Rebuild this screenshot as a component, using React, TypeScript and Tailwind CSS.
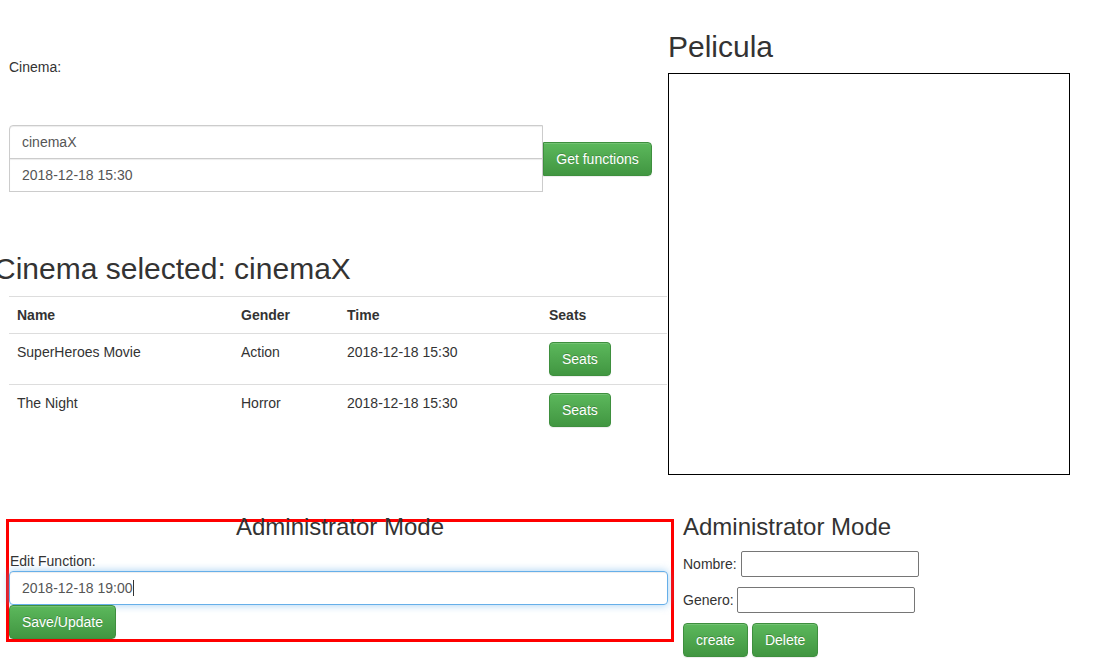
import React from "react";

const btn =
  "inline-flex items-center justify-center h-[34px] px-[12px] text-[14px] leading-[20px] text-white border border-[#3e8f3e] bg-linear-to-b from-[#5cb85c] to-[#419641] [text-shadow:0_-1px_0_rgba(0,0,0,0.2)] shadow-[inset_0_1px_0_rgba(255,255,255,0.15),0_1px_1px_rgba(0,0,0,0.075)]";

const rows = [
  { name: "SuperHeroes Movie", gender: "Action", time: "2018-12-18 15:30" },
  { name: "The Night", gender: "Horror", time: "2018-12-18 15:30" },
];

export default function App() {
  return (
    <div className="w-[1111px] h-[667px] overflow-hidden bg-white font-['Liberation_Sans',Arial,sans-serif] text-[14px] leading-[20px] text-[#333]">
      {/* Row 1 */}
      <div className="flex items-start h-[475px]">
        {/* Left column */}
        <div className="w-[668px] shrink-0">
          <div className="pt-[57px] pl-[9px] h-[77px]">Cinema:</div>
          <div className="mt-[48px] ml-[9px] flex items-center">
            <div className="w-[534px] flex flex-col">
              <div className="h-[34px] flex items-center px-[12px] border border-[#ccc] rounded-tl-[4px] text-[#555] shadow-[inset_0_1px_1px_rgba(0,0,0,0.075)]">
                cinemaX
              </div>
              <div className="-mt-px h-[34px] flex items-center px-[12px] border border-[#ccc] text-[#555] shadow-[inset_0_1px_1px_rgba(0,0,0,0.075)]">
                2018-12-18 15:30
              </div>
            </div>
            <button className={`${btn} w-[109px] rounded-r-[4px]`}>Get functions</button>
          </div>
          <h2 className="mt-[60px] -ml-[6px] h-[33px] text-[30px] leading-[33px] font-normal whitespace-nowrap">
            Cinema selected: cinemaX
          </h2>
          <table className="mt-[11px] ml-[9px] w-[658px] table-fixed border-collapse">
            <colgroup>
              <col className="w-[224px]" />
              <col className="w-[106px]" />
              <col className="w-[202px]" />
              <col className="w-[126px]" />
            </colgroup>
            <thead>
              <tr className="border-t border-b border-[#ddd]">
                <th className="text-left font-bold p-[8px] align-bottom">Name</th>
                <th className="text-left font-bold p-[8px] align-bottom">Gender</th>
                <th className="text-left font-bold p-[8px] align-bottom">Time</th>
                <th className="text-left font-bold p-[8px] align-bottom">Seats</th>
              </tr>
            </thead>
            <tbody>
              {rows.map((r, i) => (
                <tr key={i} className={i > 0 ? "border-t border-[#ddd]" : ""}>
                  <td className="p-[8px] align-top">{r.name}</td>
                  <td className="p-[8px] align-top">{r.gender}</td>
                  <td className="p-[8px] align-top">{r.time}</td>
                  <td className="p-[8px] align-top">
                    <button className={`${btn} rounded-[4px]`}>Seats</button>
                  </td>
                </tr>
              ))}
            </tbody>
          </table>
        </div>
        {/* Right column */}
        <div className="pt-[30px]">
          <h2 className="h-[33px] text-[30px] leading-[33px] font-normal">Pelicula</h2>
          <div className="mt-[10px] w-[402px] h-[402px] border border-black"></div>
        </div>
      </div>

      {/* Row 2 */}
      <div className="flex items-start">
        <div className="ml-[6px] mt-[44px] w-[668px] shrink-0 border-[3px] border-[#ff0000]">
          <h3 className="-mt-[8px] h-[26px] text-center text-[24px] leading-[26px] font-normal">
            Administrator Mode
          </h3>
          <div className="mt-[11px] h-[20px] pl-[1px]">Edit Function:</div>
          <div className="w-[659px] h-[34px] flex items-center px-[12px] border border-[#66afe9] rounded-[4px] text-[#555] shadow-[inset_0_1px_1px_rgba(0,0,0,0.075),0_0_8px_rgba(102,175,233,0.6)]">
            2018-12-18 19:00
            <span className="inline-block w-px h-[16px] bg-[#333]"></span>
          </div>
          <button className={`${btn} rounded-[4px]`}>Save/Update</button>
        </div>
        <div className="ml-[9px] mt-[39px]">
          <h3 className="h-[26px] text-[24px] leading-[26px] font-normal whitespace-nowrap">
            Administrator Mode
          </h3>
          <div className="mt-[11px] h-[26px] flex items-center whitespace-pre">
            {"Nombre: "}
            <input className="w-[178px] h-[26px] border border-[#767676] rounded-[2px] px-[2px] text-[13px] outline-none" />
          </div>
          <div className="mt-[10px] h-[26px] flex items-center whitespace-pre">
            {"Genero: "}
            <input className="w-[178px] h-[26px] border border-[#767676] rounded-[2px] px-[2px] text-[13px] outline-none" />
          </div>
          <div className="mt-[10px] flex gap-[4px]">
            <button className={`${btn} rounded-[4px]`}>create</button>
            <button className={`${btn} rounded-[4px]`}>Delete</button>
          </div>
        </div>
      </div>
    </div>
  );
}
